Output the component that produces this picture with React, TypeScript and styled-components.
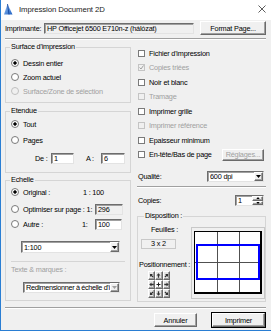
import React from "react";
import styled, { createGlobalStyle, css } from "styled-components";

const GlobalStyle = createGlobalStyle`
  html, body {
    margin: 0;
    padding: 0;
    background: #fff;
  }
  body {
    font-family: "Liberation Sans", Arial, sans-serif;
    font-size: 7.3px;
    letter-spacing: -0.2px;
    color: #000;
  }
`;

const raised = css`
  box-sizing: border-box;
  background: #f0f0f0;
  border: 1px solid;
  border-color: #ffffff #6a6a6a #6a6a6a #ffffff;
  box-shadow: inset -1px -1px 0 #a0a0a0;
`;

const sunken = css`
  box-sizing: border-box;
  border: 1px solid;
  border-color: #6d6d6d #e3e3e3 #e3e3e3 #6d6d6d;
  box-shadow: inset 1px 1px 0 #a0a0a0;
`;

const Window = styled.div`
  width: 271px;
  height: 331px;
  box-sizing: border-box;
  border-left: 1px solid #2a7ed3;
  border-bottom: 1px solid #2a7ed3;
  background: #f0f0f0;
  display: flex;
  flex-direction: column;
  overflow: hidden;
`;

const TitleBar = styled.div`
  height: 20px;
  flex: none;
  background: #fff;
  display: flex;
  align-items: center;
  padding: 0 5px 2px 2px;
  box-sizing: border-box;
`;

const Title = styled.span`
  flex: 1;
  margin-left: 6px;
  font-size: 7.8px;
  letter-spacing: -0.1px;
  color: #222;
`;

const Body = styled.div`
  flex: 1;
  display: flex;
  flex-direction: column;
  padding: 0 5px 0 4px;
`;

const PrinterRow = styled.div`
  display: flex;
  align-items: center;
  height: 14px;
  margin-top: 1px;
`;

const PrinterLabel = styled.span`
  width: 39px;
`;

const ReadField = styled.div`
  ${sunken};
  width: 150px;
  height: 11px;
  line-height: 9px;
  padding-left: 2px;
  background: #f0f0f0;
  white-space: nowrap;
  overflow: hidden;
`;

const Button = styled.div<{ $width: number; $default?: boolean; $disabled?: boolean }>`
  ${raised};
  width: ${(p) => p.$width}px;
  height: 14px;
  display: flex;
  align-items: center;
  justify-content: center;
  white-space: nowrap;
  color: ${(p) => (p.$disabled ? "#a0a0a0" : "#000")};
  ${(p) =>
    p.$default &&
    css`
      outline: 1px solid #000;
    `}
`;

const Etched = styled.div<{ $top: number }>`
  height: 0;
  margin-top: ${(p) => p.$top}px;
  border-top: 1px solid #a0a0a0;
  border-bottom: 1px solid #fff;
`;

const Columns = styled.div`
  display: flex;
  gap: 6px;
`;

const LeftCol = styled.div`
  width: 126px;
  display: flex;
  flex-direction: column;
`;

const RightCol = styled.div`
  width: 129px;
  display: flex;
  flex-direction: column;
`;

const Group = styled.fieldset<{ $top: number; $pt: number; $pb: number }>`
  margin: ${(p) => p.$top}px 0 0;
  padding: ${(p) => p.$pt}px 0 ${(p) => p.$pb}px;
  border: 1px solid #d5d5d5;
  min-width: 0;
`;

const Legend = styled.legend<{ $left?: number; $disabled?: boolean }>`
  margin-left: ${(p) => p.$left ?? 4}px;
  padding: 0 1px;
  line-height: 10px;
  color: ${(p) => (p.$disabled ? "#a0a0a0" : "#000")};
`;

const OptionRow = styled.div<{ $top?: number; $disabled?: boolean }>`
  display: flex;
  align-items: center;
  height: 14px;
  margin-top: ${(p) => p.$top ?? 0}px;
  padding-left: 5px;
  gap: 4px;
  color: ${(p) => (p.$disabled ? "#a0a0a0" : "#000")};
  white-space: nowrap;
`;

const RadioDot = styled.span<{ $checked?: boolean; $disabled?: boolean }>`
  flex: none;
  width: 8px;
  height: 8px;
  box-sizing: border-box;
  border-radius: 50%;
  border: 1px solid ${(p) => (p.$disabled ? "#c0c0c0" : "#7a7a7a")};
  background: ${(p) =>
    p.$checked
      ? "radial-gradient(circle, #000 0 1.4px, #fff 1.9px)"
      : p.$disabled
      ? "#f0f0f0"
      : "#fff"};
`;

const Box = styled.span<{ $disabled?: boolean }>`
  flex: none;
  width: 7px;
  height: 7px;
  box-sizing: border-box;
  border: 1px solid ${(p) => (p.$disabled ? "#c4c4c4" : "#7a7a7a")};
  background: ${(p) => (p.$disabled ? "#f0f0f0" : "#fff")};
  display: flex;
  align-items: center;
  justify-content: center;
`;

const CheckRow = styled.div<{ $disabled?: boolean }>`
  display: flex;
  align-items: center;
  height: 14.5px;
  padding-left: 1px;
  gap: 4px;
  color: ${(p) => (p.$disabled ? "#a0a0a0" : "#000")};
  white-space: nowrap;
`;

const CheckList = styled.div`
  margin-top: 6px;
  display: flex;
  flex-direction: column;
`;

const Fixed = styled.span<{ $w: number; $left?: number }>`
  width: ${(p) => p.$w}px;
  margin-left: ${(p) => p.$left ?? 0}px;
  flex: none;
`;

const Field = styled.div<{ $w: number; $readonly?: boolean }>`
  ${sunken};
  width: ${(p) => p.$w}px;
  height: 11px;
  line-height: 9px;
  padding-left: 2px;
  background: ${(p) => (p.$readonly ? "#f0f0f0" : "#fff")};
  color: #000;
`;

const RangeRow = styled.div`
  display: flex;
  align-items: center;
  height: 12px;
  margin-top: 5px;
  padding-left: 29px;
`;

const Select = styled.div<{ $w: number; $h?: number; $left?: number; $top?: number; $tight?: boolean }>`
  ${sunken};
  width: ${(p) => p.$w}px;
  height: ${(p) => p.$h ?? 12}px;
  margin: ${(p) => p.$top ?? 0}px 0 0 ${(p) => p.$left ?? 0}px;
  background: #fff;
  display: flex;
  align-items: center;
  padding-left: 2px;
  white-space: nowrap;
  overflow: hidden;
  color: #000;
  letter-spacing: ${(p) => (p.$tight ? "-0.35px" : "-0.2px")};
`;

const SelectText = styled.span`
  flex: 1;
  overflow: hidden;
`;

const DropBtn = styled.span<{ $disabled?: boolean }>`
  ${raised};
  flex: none;
  width: 9px;
  height: 100%;
  display: flex;
  align-items: center;
  justify-content: center;
  svg path {
    fill: ${(p) => (p.$disabled ? "#a0a0a0" : "#000")};
  }
`;

const SubLabel = styled.div<{ $top: number; $left: number; $disabled?: boolean }>`
  line-height: 10px;
  margin: ${(p) => p.$top}px 0 0 ${(p) => p.$left}px;
  color: ${(p) => (p.$disabled ? "#a0a0a0" : "#000")};
  white-space: nowrap;
`;

const InnerLine = styled.div`
  margin: 8px 5px 0;
  border-top: 1px solid #d5d5d5;
`;

const LineRow = styled.div<{ $top: number; $h: number }>`
  display: flex;
  align-items: center;
  justify-content: space-between;
  height: ${(p) => p.$h}px;
  margin-top: ${(p) => p.$top}px;
  padding: 0 2px 0 1px;
`;

const Spinner = styled.div`
  ${sunken};
  width: 29px;
  height: 11px;
  background: #fff;
  display: flex;
  padding-left: 2px;
  line-height: 9px;
`;

const SpinButtons = styled.div`
  margin-left: auto;
  display: flex;
  flex-direction: column;
  width: 11px;
`;

const SpinBtn = styled.span`
  ${raised};
  flex: 1;
  display: flex;
  align-items: center;
  justify-content: center;
`;

const Layout = styled.div`
  display: flex;
`;

const LayoutSide = styled.div`
  width: 54px;
  display: flex;
  flex-direction: column;
`;

const SheetCount = styled.div`
  margin: 4px 0 0 3px;
  width: 35px;
  height: 10px;
  box-sizing: border-box;
  border: 1px solid #c8c8c8;
  line-height: 8px;
  text-align: center;
`;

const PadGrid = styled.div`
  margin: 1px 0 0 10px;
  width: 22px;
  display: grid;
  grid-template-columns: repeat(3, 1fr);
  grid-auto-rows: 9px;
`;

const PadKey = styled.span<{ $active?: boolean }>`
  ${raised};
  display: flex;
  align-items: center;
  justify-content: center;
  background: ${(p) => (p.$active ? "#fff" : "#e6e6e6")};
`;

const ArrowSvg = styled.svg<{ $angle: number }>`
  transform: rotate(${(p) => p.$angle}deg);
`;

const Preview = styled.div`
  margin-top: 6px;
  width: 74px;
  height: 72px;
  box-sizing: border-box;
  border: 1px solid #c8c8c8;
  padding: 3px 2px 0 2px;
`;

const Sheet = styled.div`
  position: relative;
  width: 68px;
  height: 63px;
  box-sizing: border-box;
  border: 1px solid #000;
  border-right-width: 2px;
  border-bottom-width: 2px;
  background: #fff;
  display: grid;
  grid-template-columns: 23px 22px 1fr;
  grid-template-rows: 31px 1fr;
`;

const Cell = styled.span<{ $right?: boolean; $bottom?: boolean }>`
  border-right: ${(p) => (p.$right ? "1px solid #505050" : "none")};
  border-bottom: ${(p) => (p.$bottom ? "1px solid #505050" : "none")};
`;

const Extent = styled.div`
  position: absolute;
  left: 1px;
  top: 12px;
  width: 64px;
  height: 36px;
  box-sizing: border-box;
  border: 2px solid #0000ff;
`;

const Footer = styled.div`
  display: flex;
  justify-content: flex-end;
  gap: 15px;
  margin: 4px 1px 0 0;
`;

const Arrow = ({ angle }: { angle: number }) => (
  <ArrowSvg $angle={angle} width="5" height="5" viewBox="0 0 10 10">
    <path d="M5 0.5 L9 5 H6.3 V9.5 H3.7 V5 H1 Z" fill="#333" />
  </ArrowSvg>
);

const Caret = () => (
  <svg width="5" height="3" viewBox="0 0 10 6">
    <path d="M0 0 H10 L5 6 Z" fill="#000" />
  </svg>
);

const Radio = ({
  label,
  checked,
  disabled,
  top,
}: {
  label: string;
  checked?: boolean;
  disabled?: boolean;
  top?: number;
}) => (
  <OptionRow $top={top} $disabled={disabled}>
    <RadioDot $checked={checked} $disabled={disabled} />
    <span>{label}</span>
  </OptionRow>
);

const Check = ({
  label,
  checked,
  disabled,
  children,
}: {
  label: string;
  checked?: boolean;
  disabled?: boolean;
  children?: React.ReactNode;
}) => (
  <CheckRow $disabled={disabled}>
    <Box $disabled={disabled}>
      {checked && (
        <svg width="5" height="5" viewBox="0 0 10 10">
          <path d="M1 5 L4 8 L9 1" stroke={disabled ? "#a0a0a0" : "#000"} strokeWidth="2" fill="none" />
        </svg>
      )}
    </Box>
    <span>{label}</span>
    {children}
  </CheckRow>
);

const SettingsButton = styled(Button)`
  margin: 0 2px 0 auto;
  height: 12px;
`;

const PageButton = styled(Button)`
  margin-left: 6px;
`;

// flèches du pavé de positionnement (null = centre)
const pad: (number | null)[] = [-45, 0, 45, -90, null, 90, -135, 180, 135];

export default function App() {
  return (
    <>
      <GlobalStyle />
      <Window>
        <TitleBar>
          <svg width="10" height="12" viewBox="0 0 10 12">
            <defs>
              <linearGradient id="ic" x1="0" y1="0" x2="1" y2="1">
                <stop offset="0" stopColor="#9fc8f5" />
                <stop offset="1" stopColor="#1c5fc4" />
              </linearGradient>
            </defs>
            <path d="M1 11.5 L4.5 1 L9.5 11.5 Z" fill="url(#ic)" />
            <path d="M4.5 1 L6 11.5" stroke="#0d3f99" strokeWidth="0.8" />
          </svg>
          <Title>Impression Document 2D</Title>
          <svg width="8" height="8" viewBox="0 0 8 8">
            <path d="M0.5 0.5 L7.5 7.5 M7.5 0.5 L0.5 7.5" stroke="#333" strokeWidth="0.8" />
          </svg>
        </TitleBar>
        <Body>
          <PrinterRow>
            <PrinterLabel>Imprimante:</PrinterLabel>
            <ReadField>HP Officejet 6500 E710n-z (hálózat)</ReadField>
            <PageButton $width={66}>Format Page...</PageButton>
          </PrinterRow>
          <Etched $top={3} />
          <Columns>
            <LeftCol>
              <Group $top={2} $pt={4} $pb={4}>
                <Legend>Surface d'impression</Legend>
                <Radio label="Dessin entier" checked />
                <Radio label="Zoom actuel" />
                <Radio label="Surface/Zone de sélection" disabled />
              </Group>
              <Group $top={3} $pt={1} $pb={8}>
                <Legend>Etendue</Legend>
                <Radio label="Tout" checked />
                <Radio label="Pages" top={2} />
                <RangeRow>
                  <Fixed $w={16}>De :</Fixed>
                  <Field $w={23}>1</Field>
                  <Fixed $w={15} $left={12}>
                    A :
                  </Fixed>
                  <Field $w={24}>6</Field>
                </RangeRow>
              </Group>
              <Group $top={2} $pt={0} $pb={7}>
                <Legend>Echelle</Legend>
                <OptionRow>
                  <RadioDot $checked />
                  <Fixed $w={56}>Original :</Fixed>
                  <span>1 : 100</span>
                </OptionRow>
                <OptionRow $top={3}>
                  <RadioDot />
                  <Fixed $w={68}>Optimiser sur page : 1:</Fixed>
                  <Field $w={28} $readonly>
                    296
                  </Field>
                </OptionRow>
                <OptionRow $top={1}>
                  <RadioDot />
                  <Fixed $w={55}>Autre :</Fixed>
                  <Fixed $w={9}>1:</Fixed>
                  <Field $w={27}>100</Field>
                </OptionRow>
                <Select $w={99} $left={15} $top={10}>
                  <SelectText>1:100</SelectText>
                  <DropBtn>
                    <Caret />
                  </DropBtn>
                </Select>
                <InnerLine />
                <SubLabel $top={3} $left={5} $disabled>
                  Texte &amp; marques :
                </SubLabel>
                <Select $w={97} $h={11} $left={17} $top={7} $tight>
                  <SelectText>Redimensionner à échelle d'i</SelectText>
                  <DropBtn $disabled>
                    <Caret />
                  </DropBtn>
                </Select>
              </Group>
            </LeftCol>
            <RightCol>
              <CheckList>
                <Check label="Fichier d'impression" />
                <Check label="Copies triées" checked disabled />
                <Check label="Noir et blanc" />
                <Check label="Tramage" disabled />
                <Check label="Imprimer grille" />
                <Check label="Imprimer référence" disabled />
                <Check label="Epaisseur minimum" />
                <Check label="En-tête/Bas de page">
                  <SettingsButton $width={42} $disabled>
                    Réglages...
                  </SettingsButton>
                </Check>
              </CheckList>
              <LineRow $top={8} $h={12}>
                <span>Qualité:</span>
                <Select $w={57} $h={11}>
                  <SelectText>600 dpi</SelectText>
                  <DropBtn>
                    <Caret />
                  </DropBtn>
                </Select>
              </LineRow>
              <Etched $top={4} />
              <LineRow $top={7} $h={11}>
                <span>Copies:</span>
                <Spinner>
                  1
                  <SpinButtons>
                    <SpinBtn>
                      <svg width="4" height="2" viewBox="0 0 10 6">
                        <path d="M0 6 H10 L5 0 Z" fill="#000" />
                      </svg>
                    </SpinBtn>
                    <SpinBtn>
                      <svg width="4" height="2" viewBox="0 0 10 6">
                        <path d="M0 0 H10 L5 6 Z" fill="#000" />
                      </svg>
                    </SpinBtn>
                  </SpinButtons>
                </Spinner>
              </LineRow>
              <Group $top={5} $pt={0} $pb={2}>
                <Legend $left={6}>Disposition :</Legend>
                <Layout>
                  <LayoutSide>
                    <SubLabel $top={4} $left={13}>
                      Feuilles :
                    </SubLabel>
                    <SheetCount>3 x 2</SheetCount>
                    <SubLabel $top={11} $left={1}>
                      Positionnement :
                    </SubLabel>
                    <PadGrid>
                      {pad.map((a, i) =>
                        a === null ? (
                          <PadKey key={i} $active>
                            <svg width="5" height="5" viewBox="0 0 10 10">
                              <path d="M5 1 V9 M1 5 H9" stroke="#222" strokeWidth="2" />
                            </svg>
                          </PadKey>
                        ) : (
                          <PadKey key={i}>
                            <Arrow angle={a} />
                          </PadKey>
                        )
                      )}
                    </PadGrid>
                  </LayoutSide>
                  <Preview>
                    <Sheet>
                      <Cell $right $bottom />
                      <Cell $right $bottom />
                      <Cell $bottom />
                      <Cell $right />
                      <Cell $right />
                      <Cell />
                      <Extent />
                    </Sheet>
                  </Preview>
                </Layout>
              </Group>
            </RightCol>
          </Columns>
          <Etched $top={5} />
          <Footer>
            <Button $width={43}>Annuler</Button>
            <Button $width={53} $default>
              Imprimer
            </Button>
          </Footer>
        </Body>
      </Window>
    </>
  );
}
